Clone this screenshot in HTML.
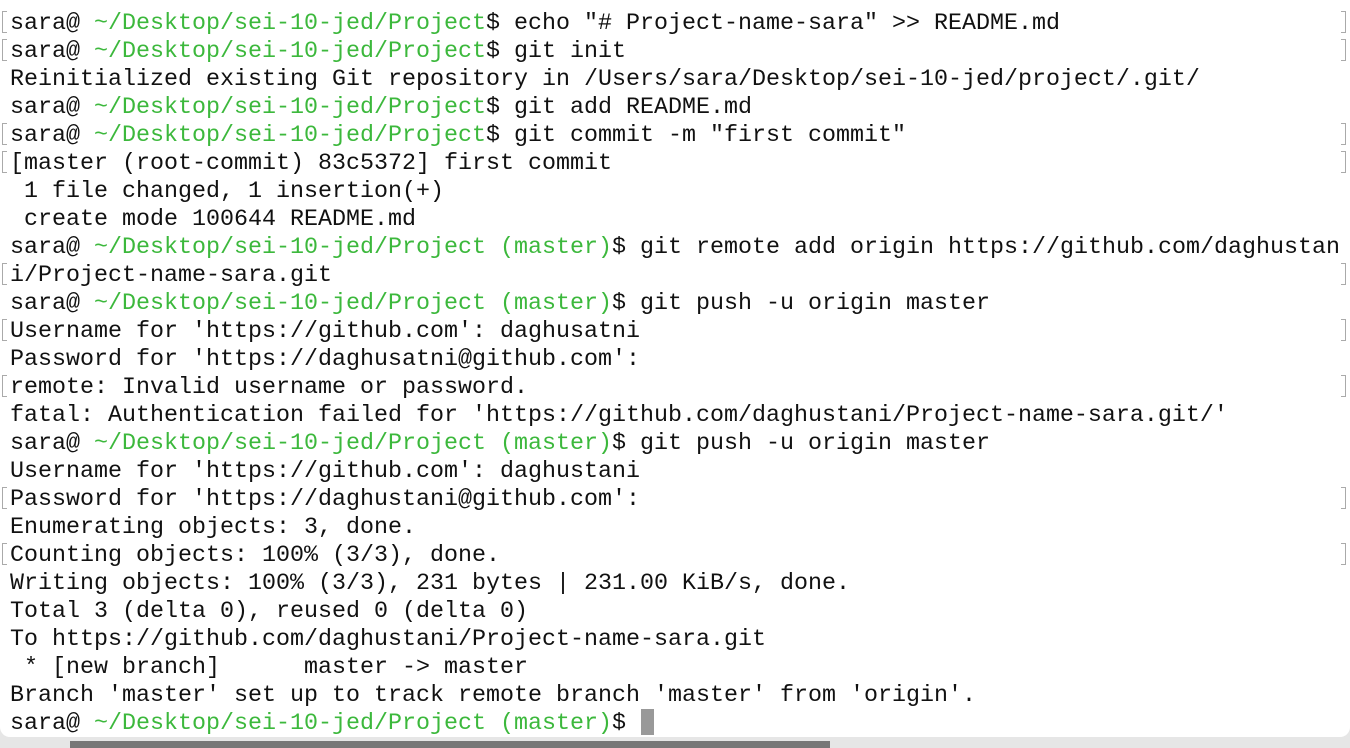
<!DOCTYPE html>
<html><head><meta charset="utf-8"><style>
html,body{margin:0;padding:0;}
body{width:1350px;height:748px;overflow:hidden;background:#e6e6e6;position:relative;font-family:"Liberation Mono",monospace;}
.win{position:absolute;left:0;top:0;width:1350px;height:737px;background:#fff;border-radius:0 0 10px 10px;}
.t{position:absolute;left:10px;top:10px;font-size:23.33px;line-height:28px;white-space:pre;color:#111;}
.g{color:#3cb83c;}
.br{position:absolute;width:5px;height:22px;border:1.5px solid #aaa;box-sizing:border-box;}
.l{left:2px;border-right:none;}
.r{left:1341px;border-left:none;}
.cur{position:absolute;left:641px;top:709px;width:13px;height:26px;background:#999;}
.under{position:absolute;left:70px;top:741px;width:760px;height:7px;background:#777;}
</style></head><body>
<div class="under"></div>
<div class="win">
<div class="t">sara@ <span class="g">~/Desktop/sei-10-jed/Project</span>$ echo "# Project-name-sara" &gt;&gt; README.md
sara@ <span class="g">~/Desktop/sei-10-jed/Project</span>$ git init
Reinitialized existing Git repository in /Users/sara/Desktop/sei-10-jed/project/.git/
sara@ <span class="g">~/Desktop/sei-10-jed/Project</span>$ git add README.md
sara@ <span class="g">~/Desktop/sei-10-jed/Project</span>$ git commit -m "first commit"
[master (root-commit) 83c5372] first commit
 1 file changed, 1 insertion(+)
 create mode 100644 README.md
sara@ <span class="g">~/Desktop/sei-10-jed/Project (master)</span>$ git remote add origin https://github.com/daghustan
i/Project-name-sara.git
sara@ <span class="g">~/Desktop/sei-10-jed/Project (master)</span>$ git push -u origin master
Username for 'https://github.com': daghusatni
Password for 'https://daghusatni@github.com':
remote: Invalid username or password.
fatal: Authentication failed for 'https://github.com/daghustani/Project-name-sara.git/'
sara@ <span class="g">~/Desktop/sei-10-jed/Project (master)</span>$ git push -u origin master
Username for 'https://github.com': daghustani
Password for 'https://daghustani@github.com':
Enumerating objects: 3, done.
Counting objects: 100% (3/3), done.
Writing objects: 100% (3/3), 231 bytes | 231.00 KiB/s, done.
Total 3 (delta 0), reused 0 (delta 0)
To https://github.com/daghustani/Project-name-sara.git
 * [new branch]      master -&gt; master
Branch 'master' set up to track remote branch 'master' from 'origin'.
sara@ <span class="g">~/Desktop/sei-10-jed/Project (master)</span>$ </div>
<div class="cur"></div>
<div class="br l" style="top:11px"></div><div class="br r" style="top:11px"></div>
<div class="br l" style="top:39px"></div><div class="br r" style="top:39px"></div>
<div class="br l" style="top:123px"></div><div class="br r" style="top:123px"></div>
<div class="br l" style="top:151px"></div><div class="br r" style="top:151px"></div>
<div class="br l" style="top:263px"></div><div class="br r" style="top:263px"></div>
<div class="br l" style="top:319px"></div><div class="br r" style="top:319px"></div>
<div class="br l" style="top:375px"></div><div class="br r" style="top:375px"></div>
<div class="br l" style="top:487px"></div><div class="br r" style="top:487px"></div>
<div class="br l" style="top:543px"></div><div class="br r" style="top:543px"></div>
</div>
</body></html>
